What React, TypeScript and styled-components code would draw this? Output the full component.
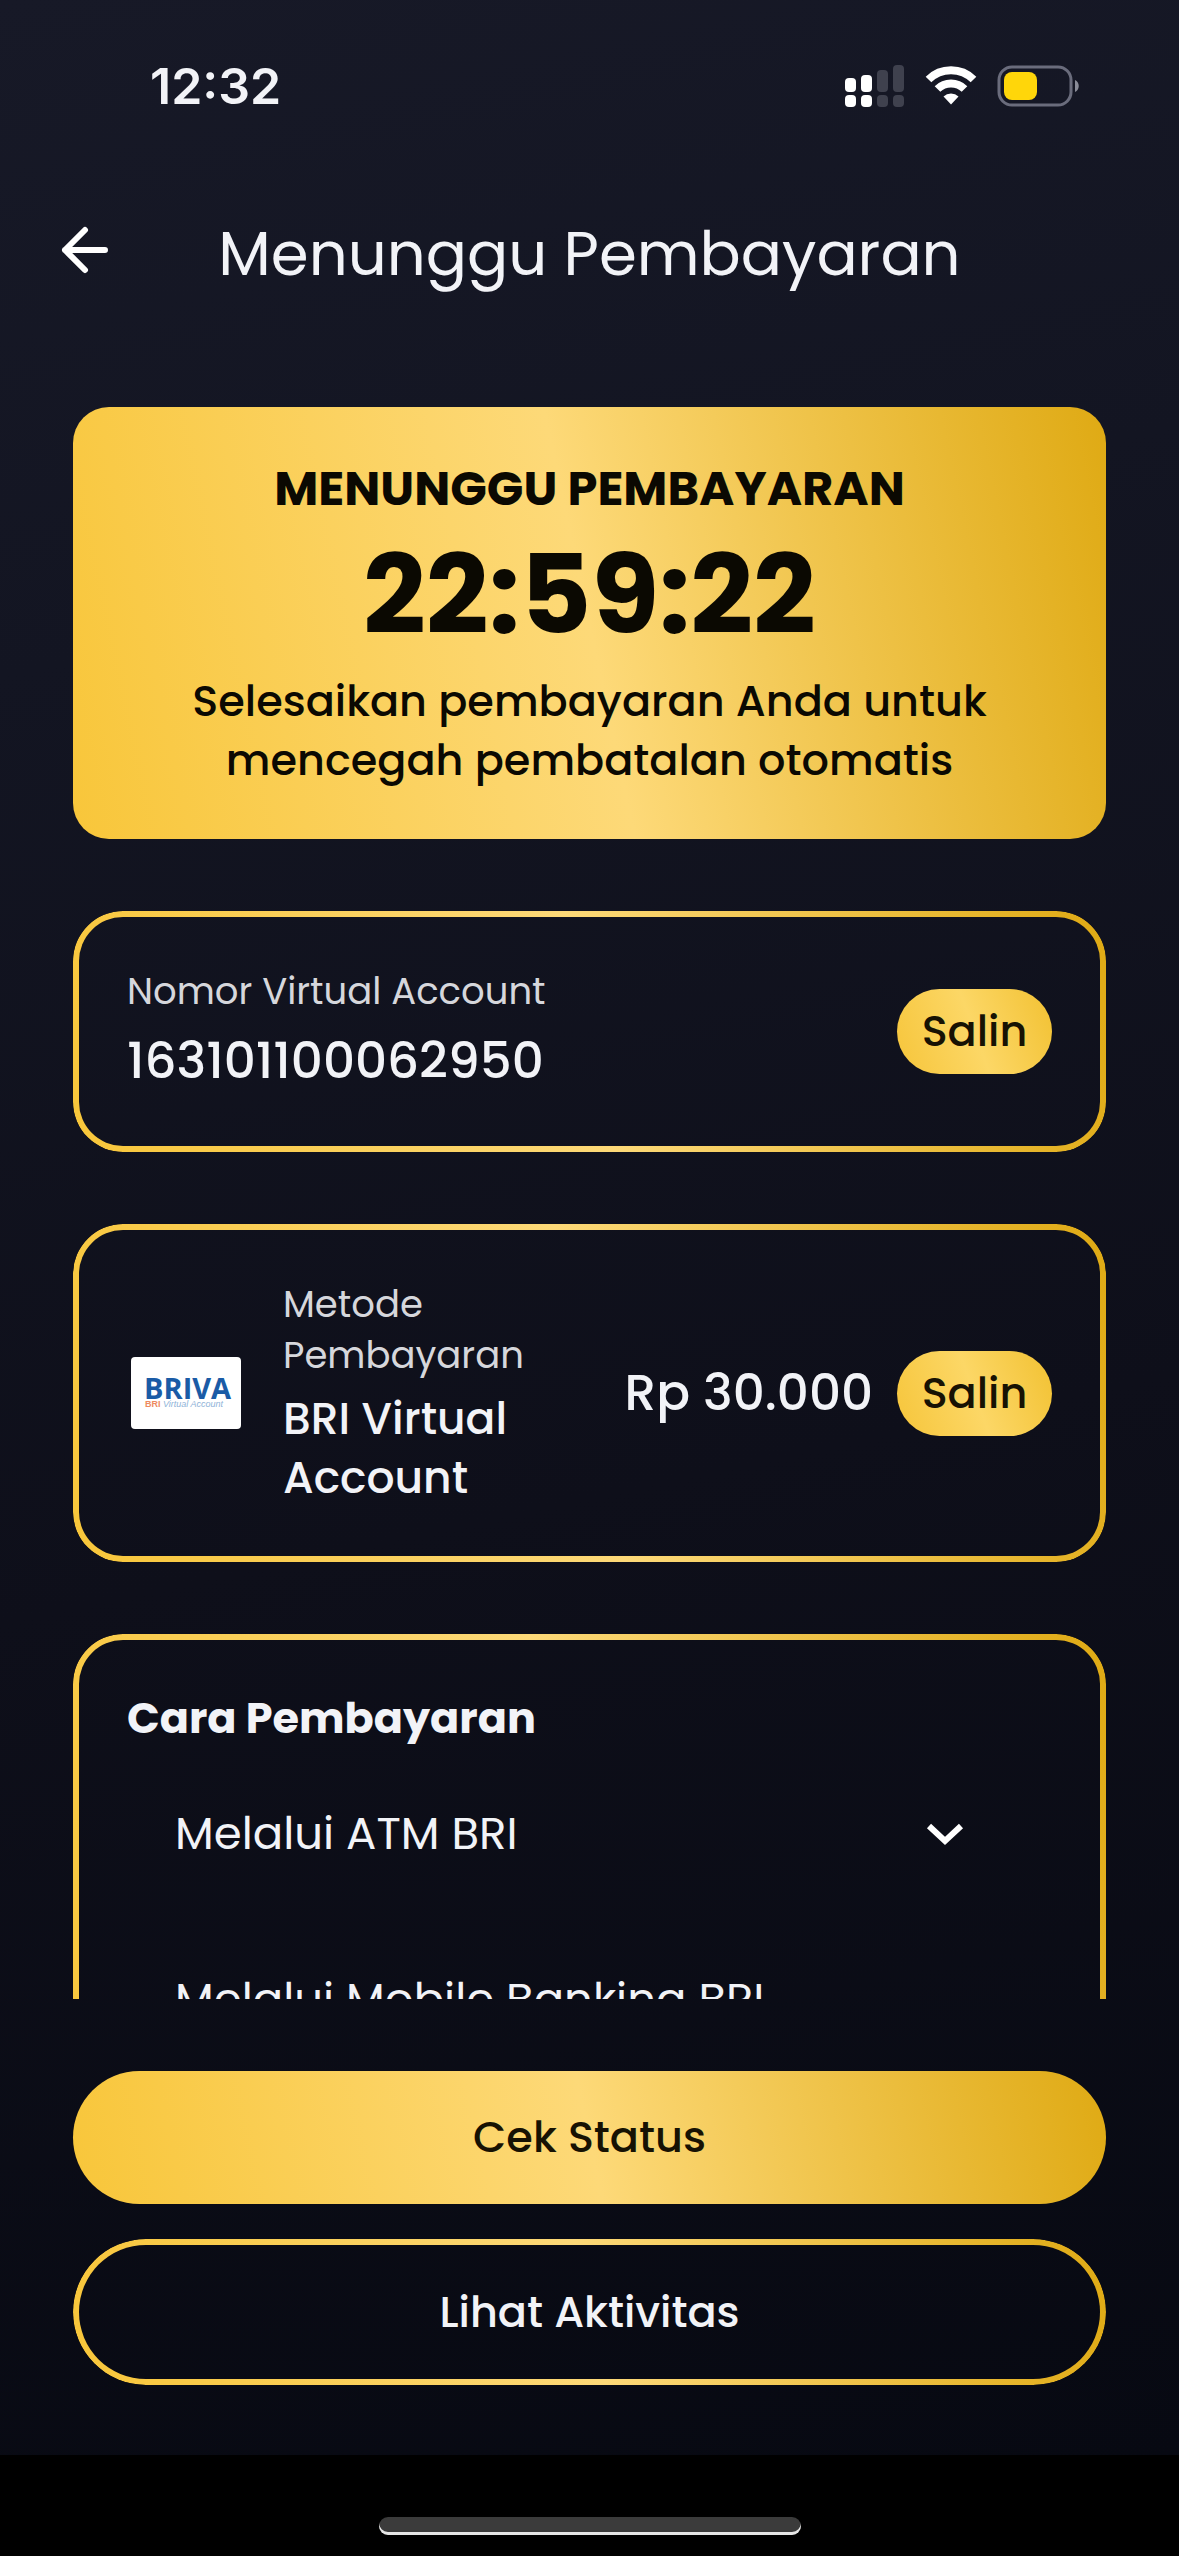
import React, { useEffect, useState } from "react";
import styled, { createGlobalStyle, css } from "styled-components";

const gold = "linear-gradient(78deg, #f8c63a 0%, #fdd978 50%, #dfaa14 100%)";
const goldSmall = "linear-gradient(70deg, #f6c53a 0%, #fcd766 50%, #f2c132 100%)";

const GlobalStyle = createGlobalStyle`
  *, *::before, *::after { box-sizing: border-box; }
  body {
    margin: 0;
    background: #000;
    color: #f2f3f7;
    font-family: Poppins, Inter, "Open Sans", sans-serif;
    -webkit-font-smoothing: antialiased;
  }
  button { font: inherit; color: inherit; border: 0; background: none; cursor: pointer; padding: 0; }
  h1, h2, p { margin: 0; }
`;

const Screen = styled.div`
  height: 100vh;
  display: flex;
  flex-direction: column;
`;

const AppBody = styled.div`
  flex: 1;
  min-height: 0;
  display: flex;
  flex-direction: column;
  background: linear-gradient(168deg, #171927 0%, #131522 25%, #0e0f1a 60%, #070912 100%);
`;

const StatusBar = styled.div`
  flex: none;
  height: 172px;
  padding: 0 98px 0 150px;
  display: flex;
  align-items: center;
  justify-content: space-between;
`;

const Clock = styled.time`
  font-family: Inter, sans-serif;
  font-size: 50px;
  line-height: 60px;
  font-weight: 600;
`;

const StatusIcons = styled.div`
  display: flex;
  align-items: center;
  gap: 20px;

  svg { display: block; }
`;

const Header = styled.header`
  flex: none;
  height: 164px;
  padding: 0 55px;
  display: grid;
  grid-template-columns: 60px 1fr 60px;
  align-items: center;
`;

const BackButton = styled.button`
  display: flex;
  height: 60px;
  padding-bottom: 8px;
  align-items: center;
`;

const Title = styled.h1`
  font-size: 61px;
  line-height: 84px;
  font-weight: 400;
  text-align: center;
  white-space: nowrap;
`;

const Content = styled.main`
  flex: 1;
  min-height: 0;
  overflow-y: auto;
  scrollbar-width: none;
  padding: 71px 73px 0;
  display: flex;
  flex-direction: column;
  gap: 72px;

  & > * { flex: none; }
`;

const TimerCard = styled.section`
  padding: 52px 72px 49px;
  border-radius: 36px;
  background: ${gold};
  color: #0b0902;
  text-align: center;
`;

const TimerTitle = styled.h2`
  font-size: 48px;
  line-height: 59px;
  font-weight: 700;
  white-space: nowrap;
`;

const Countdown = styled.div`
  margin: 17px 0;
  font-size: 110px;
  line-height: 120px;
  font-weight: 700;
`;

const TimerNote = styled.p`
  max-width: 860px;
  margin: 0 auto;
  font-size: 43px;
  line-height: 59px;
  font-weight: 500;
  text-wrap: balance;
`;

const goldOutline = css`
  position: relative;

  &::before {
    content: "";
    position: absolute;
    inset: 0;
    padding: 6px;
    border-radius: inherit;
    background: ${gold};
    mask: linear-gradient(#000 0 0) content-box exclude, linear-gradient(#000 0 0);
    pointer-events: none;
  }
`;

const Card = styled.section`
  ${goldOutline}
  border-radius: 50px;
  padding: 55px 54px;
`;

const CardRow = styled.div`
  display: flex;
  align-items: center;
`;

const Info = styled.div<{ $indent?: boolean }>`
  flex: 1;
  min-width: 0;
  margin-left: ${(p) => (p.$indent ? 42 : 0)}px;
  display: flex;
  flex-direction: column;
  gap: 8px;
`;

const Label = styled.p`
  font-size: 37px;
  line-height: 51px;
  color: #d6d7dc;
`;

const AccountNumber = styled.p`
  font-size: 50px;
  line-height: 72px;
  font-weight: 500;
`;

const MethodName = styled.p`
  font-size: 44px;
  line-height: 59px;
  font-weight: 500;
`;

const Amount = styled.p`
  margin-right: 24px;
  font-size: 50px;
  line-height: 72px;
  font-weight: 500;
  white-space: nowrap;
`;

const CopyButton = styled.button`
  flex: none;
  width: 155px;
  height: 85px;
  border-radius: 43px;
  background: ${goldSmall};
  color: #171203;
  font-size: 43px;
  line-height: 59px;
  font-weight: 500;
`;

const Logo = styled.svg`
  flex: none;
  display: block;
  width: 110px;
  height: 72px;
  margin-left: 4px;
`;

const GuideTitle = styled.h2`
  font-size: 43px;
  line-height: 59px;
  font-weight: 700;
`;

const GuideItem = styled.button`
  width: 100%;
  padding: 56px 88px 51px 48px;
  display: flex;
  align-items: center;
  justify-content: space-between;
  font-size: 45px;
  line-height: 59px;
  text-align: left;
`;

const GuideName = styled.span<{ $lines: number }>`
  min-height: ${(p) => p.$lines * 59}px;
`;

const GuideText = styled.p`
  padding: 0 48px 40px;
  font-size: 37px;
  line-height: 51px;
  color: #d6d7dc;
`;

const Footer = styled.footer`
  flex: none;
  padding: 72px 73px 70px;
  display: flex;
  flex-direction: column;
  gap: 35px;
`;

const PrimaryButton = styled.button`
  height: 133px;
  border-radius: 73px;
  background: ${gold};
  color: #171203;
  font-size: 43px;
  line-height: 59px;
  font-weight: 500;
`;

const OutlineButton = styled.button`
  ${goldOutline}
  height: 146px;
  border-radius: 73px;
  font-size: 43px;
  line-height: 59px;
  font-weight: 500;
`;

const HomeArea = styled.div`
  flex: none;
  height: 101px;
  padding-bottom: 21px;
  display: flex;
  align-items: flex-end;
  justify-content: center;
  background: #000;
`;

const HomeIndicator = styled.div`
  width: 422px;
  height: 18px;
  border-radius: 9px;
  background: #3b3b3b;
  box-shadow: inset 0 -3px 0 #e6e6e6;
`;

const SignalIcon = () => (
  <svg width="60" height="44" viewBox="0 0 60 44" aria-hidden="true">
    <g fill="#fff">
      <rect x="0" y="14" width="11" height="14" rx="4" />
      <rect x="16" y="11" width="11" height="17" rx="4" />
      <rect x="0" y="31" width="11" height="12" rx="4" />
      <rect x="16" y="31" width="11" height="12" rx="4" />
    </g>
    <g fill="#3f414e">
      <rect x="32" y="6" width="11" height="22" rx="4" />
      <rect x="48" y="1" width="11" height="27" rx="4" />
      <rect x="32" y="31" width="11" height="12" rx="4" />
      <rect x="48" y="31" width="11" height="12" rx="4" />
    </g>
  </svg>
);

const WifiIcon = () => (
  <svg width="52" height="40" viewBox="0 0 52 40" aria-hidden="true">
    <g fill="none" stroke="#fff" strokeWidth="8">
      <path d="M3.5 13.5a32 32 0 0 1 45 0" />
      <path d="M12.5 23a19.200 19.200 0 0 1 27 0" />
    </g>
    <path d="M26 38.500l-7.500-8a11 11 0 0 1 15 0z" fill="#fff" />
  </svg>
);

const BatteryIcon = () => (
  <svg width="84" height="42" viewBox="0 0 84 42" aria-hidden="true">
    <rect x="2" y="2" width="72" height="38" rx="13" fill="none" stroke="#6a6c7c" strokeWidth="3" />
    <rect x="7" y="7" width="33" height="28" rx="8" fill="#ffd60a" />
    <path d="M78 15c5 2 5 10 0 12z" fill="#8a8c98" />
  </svg>
);

const ArrowLeftIcon = () => (
  <svg width="60" height="50" viewBox="0 0 60 50" aria-hidden="true">
    <path
      d="M30 5L10 25l20 20M10 25h40"
      fill="none"
      stroke="#fff"
      strokeWidth="6"
      strokeLinecap="round"
      strokeLinejoin="round"
    />
  </svg>
);

const ChevronIcon = ({ open }: { open: boolean }) => (
  <svg width="38" height="24" viewBox="0 0 38 24" aria-hidden="true">
    <path d={open ? "M3 20L19 5l16 15" : "M3 4l16 15L35 4"} fill="none" stroke="#fff" strokeWidth="6" />
  </svg>
);

const BrivaLogo = () => (
  <Logo viewBox="0 0 110 72" role="img" aria-label="BRIVA">
    <rect width="110" height="72" rx="4" fill="#fff" />
    <text x="13" y="42" fontFamily="Open Sans, sans-serif" fontWeight="700" fontSize="29" fill="#1a5ba6">
      BRIVA
    </text>
    <text x="14" y="50" fontFamily="Liberation Sans, sans-serif" fontWeight="700" fontSize="9" fill="#ee8a60">
      BRI
    </text>
    <text x="32" y="50" fontFamily="Liberation Sans, sans-serif" fontStyle="italic" fontSize="9" fill="#8fb3d8">
      Virtual Account
    </text>
  </Logo>
);

const guides = [
  { title: "Melalui ATM BRI", lines: 1, text: "Masukkan kartu ATM, lalu pilih menu BRIVA." },
  { title: "Melalui Mobile Banking BRI", lines: 2, text: "Buka aplikasi, lalu pilih menu BRIVA." },
];

const two = (n: number) => String(n).padStart(2, "0");

export default function App() {
  const [left] = useState(22 * 3600 + 59 * 60 + 22);
  const [opened, setOpened] = useState<number | null>(null);

  useEffect(() => {
    document.title = "Menunggu Pembayaran";
  }, []);

  const copy = (value: string) => navigator.clipboard?.writeText(value);

  return (
    <Screen>
      <GlobalStyle />
      <AppBody>
        <StatusBar>
          <Clock>12:32</Clock>
          <StatusIcons>
            <SignalIcon />
            <WifiIcon />
            <BatteryIcon />
          </StatusIcons>
        </StatusBar>
        <Header>
          <BackButton aria-label="Kembali">
            <ArrowLeftIcon />
          </BackButton>
          <Title>Menunggu Pembayaran</Title>
        </Header>
        <Content>
          <TimerCard>
            <TimerTitle>MENUNGGU PEMBAYARAN</TimerTitle>
            <Countdown>
              {`${two(Math.floor(left / 3600))}:${two(Math.floor(left / 60) % 60)}:${two(left % 60)}`}
            </Countdown>
            <TimerNote>Selesaikan pembayaran Anda untuk mencegah pembatalan otomatis</TimerNote>
          </TimerCard>
          <Card>
            <CardRow>
              <Info>
                <Label>Nomor Virtual Account</Label>
                <AccountNumber>163101100062950</AccountNumber>
              </Info>
              <CopyButton onClick={() => copy("163101100062950")}>Salin</CopyButton>
            </CardRow>
          </Card>
          <Card>
            <CardRow>
              <BrivaLogo />
              <Info $indent>
                <Label>Metode Pembayaran</Label>
                <MethodName>BRI Virtual Account</MethodName>
              </Info>
              <Amount>Rp 30.000</Amount>
              <CopyButton onClick={() => copy("30000")}>Salin</CopyButton>
            </CardRow>
          </Card>
          <Card>
            <GuideTitle>Cara Pembayaran</GuideTitle>
            {guides.map((g, i) => (
              <React.Fragment key={g.title}>
                <GuideItem aria-expanded={opened === i} onClick={() => setOpened(opened === i ? null : i)}>
                  <GuideName $lines={g.lines}>{g.title}</GuideName>
                  <ChevronIcon open={opened === i} />
                </GuideItem>
                {opened === i && <GuideText>{g.text}</GuideText>}
              </React.Fragment>
            ))}
          </Card>
        </Content>
        <Footer>
          <PrimaryButton>Cek Status</PrimaryButton>
          <OutlineButton>Lihat Aktivitas</OutlineButton>
        </Footer>
      </AppBody>
      <HomeArea>
        <HomeIndicator />
      </HomeArea>
    </Screen>
  );
}
